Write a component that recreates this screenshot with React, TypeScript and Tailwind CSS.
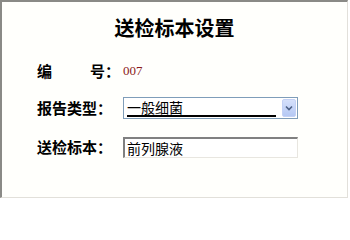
const cjk = { fontFamily: '"Noto Sans CJK SC", "Liberation Sans", sans-serif' };

const App = () => {
    return (
        <div className="w-[350px] h-[200px] bg-white" style={cjk}>
            {/* framed panel */}
            <div className="w-[348px] h-[198px] bg-[#fffffc] border-t-2 border-l-2 border-t-[#8a8a86] border-l-[#8a8a86] border-r border-b border-r-[#e2e0da] border-b-[#e2e0da] pl-[35px]">
                <div className="mt-[14px] h-6 leading-6 text-center text-[20px] font-bold text-black pr-[35px]">
                    送检标本设置
                </div>

                {/* 编号 */}
                <div className="mt-[20px] h-[22px] flex items-center text-[15px] font-bold text-black">
                    <div className="w-[86px] flex items-center">
                        <span>编</span>
                        <span className="ml-[38px]">号：</span>
                    </div>
                    <span className="text-[13px] font-normal text-[#8b1a1a]" style={{ fontFamily: '"Liberation Serif", serif' }}>007</span>
                </div>

                {/* 报告类型 */}
                <div className="mt-[15px] h-[22px] flex items-center text-[15px] font-bold text-black">
                    <div className="w-[86px]">报告类型：</div>
                    <div className="w-[175px] h-[22px] border border-[#7f9db9] bg-white flex items-center pl-[3px] pr-[1px]">
                        <div className="flex-1 h-[18px] text-[14px] font-normal leading-[16px] border-b-2 border-black">一般细菌</div>
                        <div className="ml-[6px] w-[14px] h-[18px] rounded-[2px] bg-gradient-to-b from-[#d5e0fb] to-[#b5c8f4] border border-[#c3d1f5] flex items-center justify-center">
                            <svg width="8" height="6" viewBox="0 0 8 6">
                                <path d="M1 1.5 L4 4.5 L7 1.5" stroke="#4d6185" strokeWidth="1.6" fill="none" />
                            </svg>
                        </div>
                    </div>
                </div>

                {/* 送检标本 */}
                <div className="mt-[18px] h-[21px] flex items-center text-[15px] font-bold text-black">
                    <div className="w-[86px]">送检标本：</div>
                    <div className="w-[175px] h-[21px] border-t-2 border-l-2 border-t-[#808080] border-l-[#808080] border-r border-b border-r-[#e8e6e0] border-b-[#e8e6e0] bg-white pl-[2px] text-[14px] font-normal leading-[18px]">
                        前列腺液
                    </div>
                </div>
            </div>
        </div>
    )
}

export default App
